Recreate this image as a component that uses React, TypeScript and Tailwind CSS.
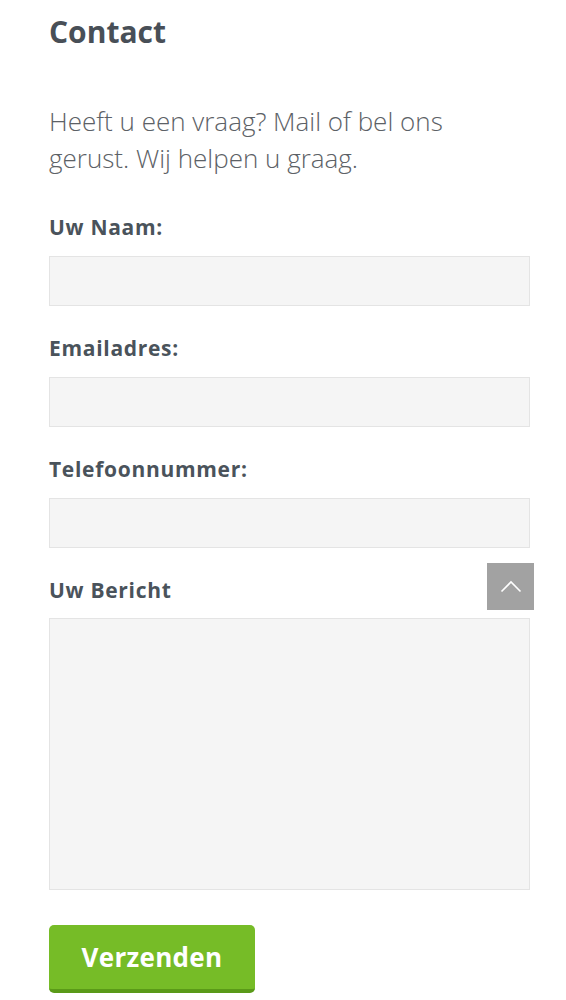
export default function App() {
  const font = { fontFamily: '"Open Sans", Lato, sans-serif' };
  const fields = ["Uw Naam:", "Emailadres:", "Telefoonnummer:"];
  return (
    <div className="relative min-h-[1000px] bg-white" style={font}>
      <div className="px-[49px] pr-[36px]">
        <h1 className="pt-[14px] text-[30px] leading-[36px] font-bold text-[#484f57]">Contact</h1>
        <p className="mt-[53px] w-[450px] text-[26px] leading-[37px] font-light text-[#5c6166]">
          Heeft u een vraag? Mail of bel ons gerust. Wij helpen u graag.
        </p>
        <form className="mt-[36px]" onSubmit={(e) => e.preventDefault()}>
          {fields.map((f, i) => (
            <div key={f} className={i === 0 ? "" : "mt-[28px]"}>
              <label className="block text-[21px] leading-[28px] font-bold tracking-[0.7px] text-[#4a535b]">{f}</label>
              <input className="mt-[15px] block h-[50px] w-[481px] border border-[#e4e4e4] bg-[#f5f5f5] outline-none" />
            </div>
          ))}
          <div className="mt-[28px]">
            <label className="block text-[21px] leading-[28px] font-bold tracking-[0.7px] text-[#4a535b]">Uw Bericht</label>
            <textarea className="mt-[14px] block h-[272px] w-[481px] resize-none border border-[#e4e4e4] bg-[#f5f5f5] outline-none" />
          </div>
          <button
            type="submit"
            className="mt-[35px] flex h-[68px] w-[206px] items-center justify-center rounded-[5px] border-b-[4px] border-[#5a9a18] bg-[#76bc27] text-[26px] font-bold tracking-[0.3px] text-white"
          >
            Verzenden
          </button>
        </form>
      </div>
      <div className="absolute left-[487px] top-[563px] flex h-[47px] w-[47px] items-center justify-center bg-[#a2a2a2]">
        <svg width="22" height="13" viewBox="0 0 22 13" fill="none">
          <path d="M1.5 11.5 L11 2 L20.5 11.5" stroke="white" strokeWidth="1.6" />
        </svg>
      </div>
    </div>
  );
}
